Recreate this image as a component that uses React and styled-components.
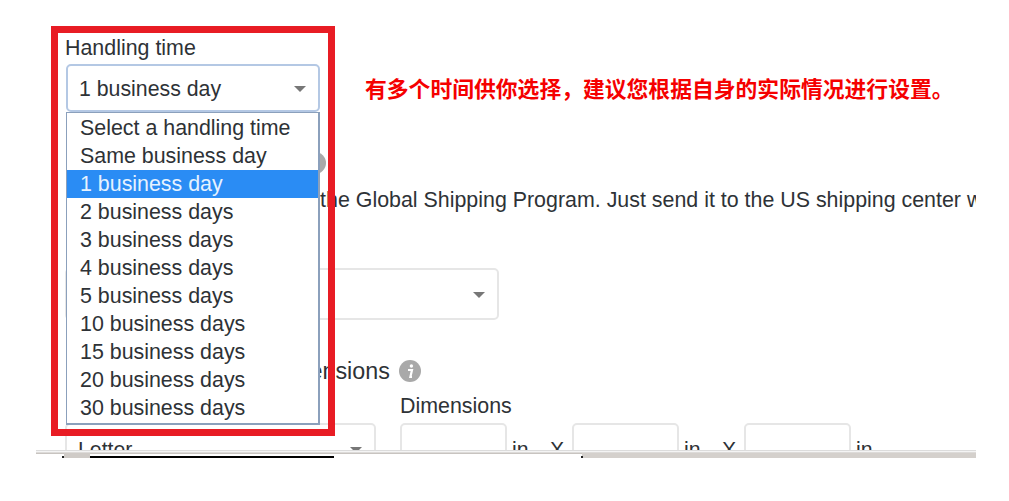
import React from "react";
import styled, { createGlobalStyle } from "styled-components";

const Global = createGlobalStyle`
  html, body { margin: 0; padding: 0; background: #fff; }
  body { font-family: "Liberation Sans", Arial, sans-serif; color: #2e3236; }
`;

const Page = styled.div`
  position: relative;
  width: 1009px;
  height: 501px;
  overflow: hidden;
  background: #fff;
`;

const Viewport = styled.div`
  width: 940px;
  height: 450px;
  margin-left: 36px;
  padding: 36px 0 0 29px;
  box-sizing: border-box;
  overflow: hidden;
  white-space: nowrap;
`;

const Label = styled.div`
  font-size: 21.4px;
  line-height: 24px;
  height: 24px;
`;

const TopRow = styled.div`
  display: flex;
  align-items: center;
  gap: 45px;
  margin: 4px 0 0 1px;
`;

const Note = styled.div`
  font-family: "Noto Sans CJK SC", sans-serif;
  font-weight: 700;
  font-size: 21.8px;
  line-height: 28px;
  color: #f50000;
`;

const Select = styled.div`
  box-sizing: border-box;
  display: flex;
  align-items: center;
  justify-content: space-between;
  flex: none;
  width: ${(p) => p.$w}px;
  height: ${(p) => p.$h}px;
  padding: 2px 12px 0 11px;
  border: 2px solid ${(p) => (p.$focus ? "#b4c8e4" : "#e6e6e6")};
  border-radius: 5px;
  font-size: 21.3px;
  background: #fff;
`;

const Arrow = styled.span`
  width: 0;
  height: 0;
  border-left: 6.5px solid transparent;
  border-right: 6.5px solid transparent;
  border-top: 6px solid #777;
`;

const SectionTitle = styled.div`
  display: flex;
  align-items: center;
  gap: ${(p) => p.$gap}px;
  font-size: 23.3px;
  line-height: 26px;
  margin-left: ${(p) => p.$indent}px;
  margin-top: ${(p) => p.$top}px;
`;

const Info = styled.svg`
  width: 22px;
  height: 22px;
  flex: none;
`;

const Body = styled.div`
  font-size: 21.4px;
  line-height: 24px;
  margin: 12px 0 0 3px;
`;

const Spacer = styled.div`
  height: ${(p) => p.$h}px;
`;

const FieldRow = styled.div`
  display: flex;
  gap: 24px;
  margin-top: 10px;
`;

const Field = styled.div`
  display: flex;
  flex-direction: column;
  gap: 5px;
`;

const Dims = styled.div`
  display: flex;
  align-items: center;
  font-size: 21.3px;
`;

const DimInput = styled.div`
  box-sizing: border-box;
  width: 107px;
  height: 52px;
  border: 2px solid #e6e6e6;
  border-radius: 5px;
`;

const Unit = styled.span`
  margin-left: 5px;
  padding-top: 2px;
  width: 38px;
`;

const Times = styled.span`
  padding-top: 2px;
  width: 22px;
`;

const ScrollEdge = styled.div`
  position: relative;
  width: 940px;
  height: 9px;
  margin-left: 36px;
  background: linear-gradient(#dcdcdc 0 1px, #f4f4f4 1px 2px, #dddbd9 2px 3px, #c8c4c0 3px 4px, transparent 4px);
`;

const Thumb = styled.div`
  position: absolute;
  left: ${(p) => p.$left}px;
  width: ${(p) => p.$w}px;
  top: ${(p) => p.$top}px;
  height: ${(p) => p.$h}px;
  background: ${(p) => p.$bg};
`;

const Annotation = styled.div`
  position: absolute;
  left: 51px;
  top: 26px;
  width: 284px;
  height: 410px;
  box-sizing: border-box;
  border: 7px solid #e81c24;
  pointer-events: none;
`;

const List = styled.ul`
  position: absolute;
  left: 66px;
  top: 112px;
  width: 254px;
  height: 313px;
  box-sizing: border-box;
  margin: 0;
  padding: 1px 0 0;
  list-style: none;
  background: #fff;
  border: 1px solid #8ba0bc;
  border-width: 1px 2px 2px 1px;
`;

const Option = styled.li`
  box-sizing: border-box;
  height: 28px;
  line-height: 28px;
  padding-left: 13px;
  font-size: 21.4px;
  white-space: nowrap;
  color: ${(p) => (p.$active ? "#e6f2ff" : "#2e3236")};
  background: ${(p) => (p.$active ? "#2a8cf4" : "transparent")};
`;

const options = [
  "Select a handling time",
  "Same business day",
  "1 business day",
  "2 business days",
  "3 business days",
  "4 business days",
  "5 business days",
  "10 business days",
  "15 business days",
  "20 business days",
  "30 business days",
];

const InfoIcon = () => (
  <Info viewBox="0 0 22 22">
    <circle cx="11" cy="11" r="11" fill="#a9a9a9" />
    <circle cx="12.4" cy="6" r="1.7" fill="#fff" />
    <path d="M9 10h4l-1.6 7h1.6" fill="none" stroke="#fff" strokeWidth="2.2" />
  </Info>
);

export default function App() {
  return (
    <Page>
      <Global />
      <Viewport>
        <Label>Handling time</Label>
        <TopRow>
          <Select $w={254} $h={48} $focus>
            1 business day
            <Arrow />
          </Select>
          <Note>有多个时间供你选择，建议您根据自身的实际情况进行设置。</Note>
        </TopRow>
        <SectionTitle $top={38} $indent={0} $gap={18}>
          International shipping
          <InfoIcon />
        </SectionTitle>
        <Body>Sell to buyers abroad with the Global Shipping Program. Just send it to the US shipping center with your item.</Body>
        <Spacer $h={56} />
        <Select $w={434} $h={52}>
          <span />
          <Arrow />
        </Select>
        <SectionTitle $top={38} $indent={14} $gap={9.5}>
          Package weight &amp; dimensions
          <InfoIcon />
        </SectionTitle>
        <FieldRow>
          <Field>
            <Label>Package type</Label>
            <Select $w={311} $h={52}>
              Letter
              <Arrow />
            </Select>
          </Field>
          <Field>
            <Label>Dimensions</Label>
            <Dims>
              <DimInput />
              <Unit>in</Unit>
              <Times>X</Times>
              <DimInput />
              <Unit>in</Unit>
              <Times>X</Times>
              <DimInput />
              <Unit>in</Unit>
            </Dims>
          </Field>
        </FieldRow>
      </Viewport>
      <ScrollEdge>
        <Thumb $left={26} $w={2} $top={6} $h={2} $bg="#222" />
        <Thumb $left={28} $w={26} $top={3} $h={5} $bg="#cfcbc7" />
        <Thumb $left={54} $w={244} $top={6} $h={2} $bg="#000" />
        <Thumb $left={546} $w={394} $top={3} $h={5} $bg="#d4d0cc" />
        <Thumb $left={545} $w={2} $top={6} $h={2} $bg="#222" />
      </ScrollEdge>
      <List>
        {options.map((o) => (
          <Option key={o} $active={o === "1 business day"}>{o}</Option>
        ))}
      </List>
      <Annotation />
    </Page>
  );
}
